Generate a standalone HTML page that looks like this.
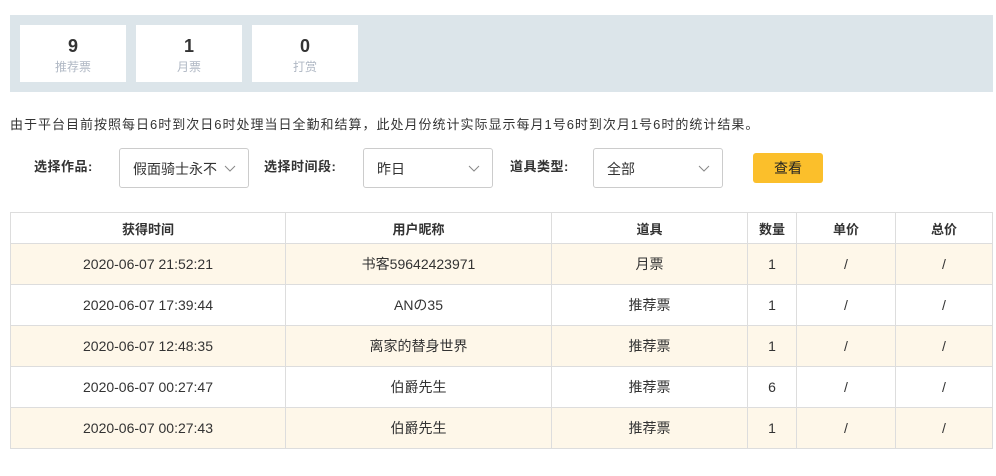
<!DOCTYPE html>
<html><head><meta charset="utf-8"><style>
*{margin:0;padding:0;box-sizing:border-box}
body{width:996px;height:476px;background:#fff;font-family:"Liberation Sans","Noto Sans CJK SC",sans-serif;color:#333;position:relative;overflow:hidden}
.stats{position:absolute;left:10px;top:15px;width:983px;height:77px;background:#dce5ea}
.card{position:absolute;top:10px;width:106px;height:57px;background:#fff;text-align:center}
.card b{display:block;font-size:18px;margin-top:11px;line-height:21px;color:#333}
.card span{display:block;font-size:12px;color:#b0b8c4;line-height:20px}
.note{position:absolute;left:10px;top:116px;font-size:13px;line-height:18px;color:#333;letter-spacing:1px}
.lbl{position:absolute;top:158px;font-size:13px;font-weight:bold;line-height:18px;letter-spacing:.5px}
.sel{position:absolute;top:148px;width:130px;height:40px;border:1px solid #ccc;border-radius:3px;font-size:14px;line-height:40px;padding-left:13px;overflow:hidden;white-space:nowrap}
.sel svg{position:absolute;right:12px;top:16px}
.btn{position:absolute;left:753px;top:153px;width:70px;height:30px;background:#fbbf2b;border-radius:3px;font-size:14px;text-align:center;line-height:30px;color:#222}
table{position:absolute;left:10px;top:212px;width:983px;border-collapse:collapse;font-size:14px}
td,th{border:1px solid #ddd;text-align:center;padding:0}
th{height:31px;font-size:13px;font-weight:bold}
td{height:41px}
tr.y td{background:#fef7e9}
</style></head><body>
<div class="stats">
<div class="card" style="left:10px"><b>9</b><span>推荐票</span></div>
<div class="card" style="left:126px"><b>1</b><span>月票</span></div>
<div class="card" style="left:242px"><b>0</b><span>打赏</span></div>
</div>
<div class="note">由于平台目前按照每日6时到次日6时处理当日全勤和结算，此处月份统计实际显示每月1号6时到次月1号6时的统计结果。</div>
<div class="lbl" style="left:34px">选择作品:</div>
<div class="sel" style="left:119px">假面骑士永不<svg width="12" height="8"><path d="M1 1L6 6L11 1" stroke="#888" fill="none"/></svg></div>
<div class="lbl" style="left:264px">选择时间段:</div>
<div class="sel" style="left:363px">昨日<svg width="12" height="8"><path d="M1 1L6 6L11 1" stroke="#888" fill="none"/></svg></div>
<div class="lbl" style="left:510px">道具类型:</div>
<div class="sel" style="left:593px">全部<svg width="12" height="8"><path d="M1 1L6 6L11 1" stroke="#888" fill="none"/></svg></div>
<div class="btn">查看</div>
<table>
<tr><th style="width:275px">获得时间</th><th style="width:266px">用户昵称</th><th style="width:196px">道具</th><th style="width:49px">数量</th><th style="width:99px">单价</th><th>总价</th></tr>
<tr class="y"><td>2020-06-07 21:52:21</td><td>书客59642423971</td><td>月票</td><td>1</td><td>/</td><td>/</td></tr>
<tr><td>2020-06-07 17:39:44</td><td>ANの35</td><td>推荐票</td><td>1</td><td>/</td><td>/</td></tr>
<tr class="y"><td>2020-06-07 12:48:35</td><td>离家的替身世界</td><td>推荐票</td><td>1</td><td>/</td><td>/</td></tr>
<tr><td>2020-06-07 00:27:47</td><td>伯爵先生</td><td>推荐票</td><td>6</td><td>/</td><td>/</td></tr>
<tr class="y"><td>2020-06-07 00:27:43</td><td>伯爵先生</td><td>推荐票</td><td>1</td><td>/</td><td>/</td></tr>
</table>
</body></html>
